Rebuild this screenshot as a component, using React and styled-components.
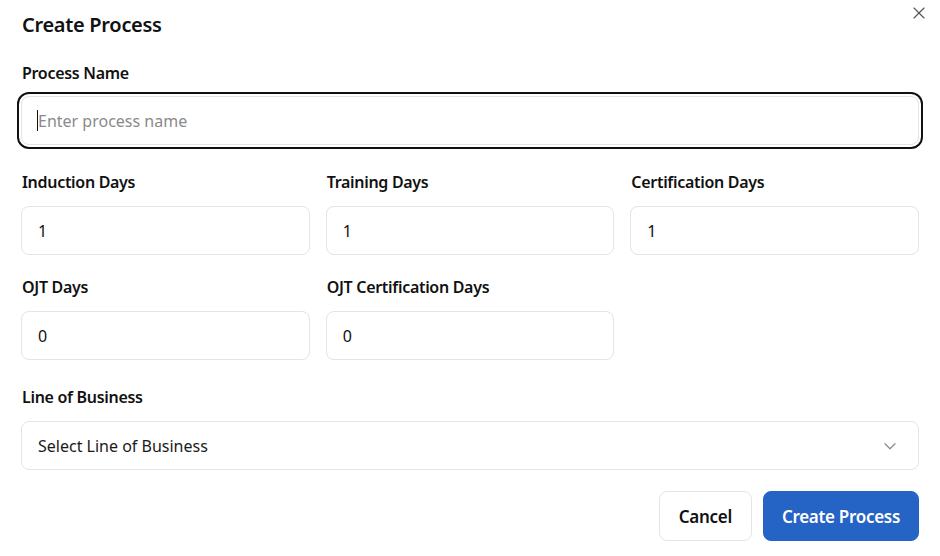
import React from 'react';
import styled, { createGlobalStyle } from 'styled-components';

const GlobalStyle = createGlobalStyle`
  * { box-sizing: border-box; }
  body {
    margin: 0;
    background: #ffffff;
    font-family: "Noto Sans", "Open Sans", sans-serif;
    color: #111111;
  }
`;

const Dialog = styled.div`
  position: relative;
  width: 940px;
  height: 556px;
  padding: 11px 21px 0 21px;
  background: #ffffff;
`;

const Title = styled.h2`
  margin: 0 0 22px 1px;
  font-size: 20px;
  line-height: 28px;
  font-weight: 600;
  letter-spacing: -0.3px;
  color: #111111;
`;

const CloseButton = styled.button`
  position: absolute;
  top: 3px;
  right: 11px;
  width: 20px;
  height: 20px;
  padding: 0;
  border: none;
  background: none;
  display: flex;
  align-items: center;
  justify-content: center;
  color: #555555;
  cursor: pointer;
`;

const Section = styled.div`
  margin-bottom: ${p => p.$gap || 25}px;
`;

const Grid = styled.div`
  display: grid;
  grid-template-columns: repeat(3, 1fr);
  column-gap: 16px;
  row-gap: 20px;
  margin-bottom: 25px;
`;

const Field = styled.div`
  display: flex;
  flex-direction: column;
`;

const Label = styled.label`
  font-size: 16px;
  line-height: 24px;
  font-weight: 600;
  letter-spacing: -0.3px;
  color: #111111;
  margin-bottom: ${p => p.$gap || 12}px;
  padding-left: 1px;
`;

const InputWrap = styled.div`
  position: relative;
`;

const Input = styled.input`
  width: 100%;
  height: 49px;
  padding: 0 16px;
  border: 1px solid #e4e4e7;
  border-radius: 8px;
  background: #ffffff;
  font-family: inherit;
  font-size: 16px;
  color: #111111;
  outline: ${p => (p.$focused ? '2px solid #111111' : 'none')};
  outline-offset: 2px;

  &::placeholder {
    color: #8a8a8a;
  }
`;

const Caret = styled.span`
  position: absolute;
  left: 16px;
  top: 14px;
  width: 1px;
  height: 21px;
  background: #111111;
`;

const Select = styled.div`
  height: 49px;
  padding: 0 17px 0 16px;
  border: 1px solid #e4e4e7;
  border-radius: 8px;
  display: flex;
  align-items: center;
  justify-content: space-between;
  font-size: 16px;
  color: #1a1a1a;
`;

const Footer = styled.div`
  display: flex;
  justify-content: flex-end;
  gap: 11px;
`;

const Button = styled.button`
  height: 50px;
  padding: 0 ${p => (p.$primary ? 18 : 19)}px;
  border-radius: 8px;
  border: 1px solid ${p => (p.$primary ? '#2563c4' : '#e4e4e7')};
  background: ${p => (p.$primary ? '#2563c4' : '#ffffff')};
  color: ${p => (p.$primary ? '#ffffff' : '#111111')};
  font-family: inherit;
  font-size: 17px;
  font-weight: 600;
  letter-spacing: -0.3px;
  cursor: pointer;
`;

const dayFields = [
  { label: 'Induction Days', value: '1' },
  { label: 'Training Days', value: '1' },
  { label: 'Certification Days', value: '1' },
  { label: 'OJT Days', value: '0' },
  { label: 'OJT Certification Days', value: '0' },
];

const XIcon = () => (
  <svg width="20" height="20" viewBox="0 0 24 24" fill="none" stroke="currentColor" strokeWidth="1.4" strokeLinecap="round">
    <path d="M18 6 6 18" />
    <path d="m6 6 12 12" />
  </svg>
);

const Chevron = () => (
  <svg width="22" height="22" viewBox="0 0 24 24" fill="none" stroke="#8a8a8a" strokeWidth="1.3" strokeLinecap="round" strokeLinejoin="round">
    <path d="m6.5 9.5 5.5 5.5 5.5-5.5" />
  </svg>
);

const App = () => {
  return (
    <>
      <GlobalStyle />
      <Dialog>
        <CloseButton aria-label="Close"><XIcon /></CloseButton>
        <Title>Create Process</Title>
        <Section>
          <Field>
            <Label $gap={11}>Process Name</Label>
            <InputWrap>
              <Input $focused placeholder="Enter process name" readOnly />
              <Caret />
            </InputWrap>
          </Field>
        </Section>
        <Grid>
          {dayFields.map(f => (
            <Field key={f.label}>
              <Label>{f.label}</Label>
              <Input defaultValue={f.value} />
            </Field>
          ))}
        </Grid>
        <Section $gap={21}>
          <Field>
            <Label>Line of Business</Label>
            <Select>
              <span>Select Line of Business</span>
              <Chevron />
            </Select>
          </Field>
        </Section>
        <Footer>
          <Button>Cancel</Button>
          <Button $primary>Create Process</Button>
        </Footer>
      </Dialog>
    </>
  );
};

export default App;
